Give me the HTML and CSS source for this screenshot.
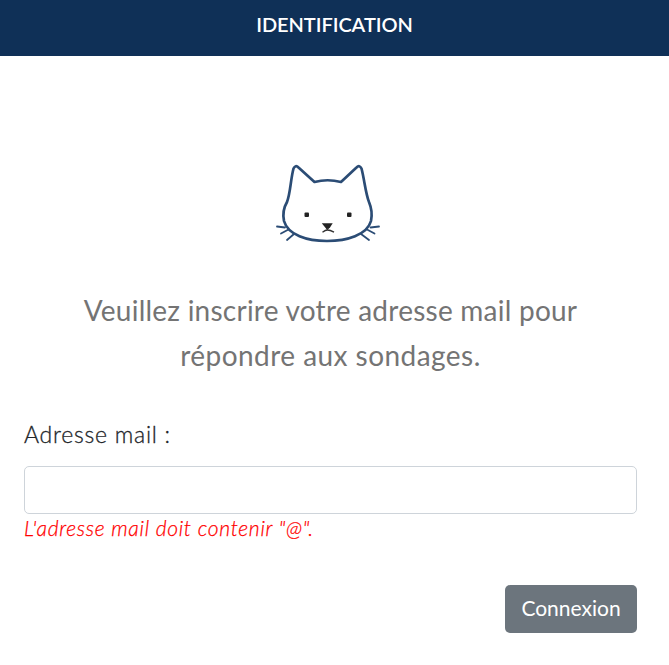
FILE: index.html
```html
<!DOCTYPE html>
<html lang="fr">
<head>
<meta charset="utf-8">
<title>Identification</title>
<link rel="stylesheet" href="styles.css">
</head>
<body>
<header class="topbar"><h1 class="title">IDENTIFICATION</h1></header>
<main class="content">
<svg class="logo" viewBox="265 150 130 105" aria-hidden="true">
<g class="outline">
<path d="M314.500 182L298.500 167.500Q295.500 164.500 293.500 168.500C290.500 180 290.500 193 287 202C283.500 208 282.500 214 284 221C288 235 307 241 327 241C347 241 367 235 371 221C372.500 214 371.500 208 369 202C365.500 193 364.500 180 361.500 168.500Q359.500 164.500 356.500 167.500L341 182Q327.500 178.500 314.500 182Z"/>
<path class="whisker" d="M277 226.500L285 227.500M281 233.500L288.500 229.500M287 240L294 234M379 226.500L370.500 227.500M374.500 233.500L367 229.500M369 240L361 234"/>
</g>
<g class="face">
<rect x="304.500" y="212.500" width="4.500" height="4.500" rx="1"/><rect x="347" y="212.500" width="4.500" height="4.500" rx="1"/>
<path d="M321.800 223.300H332.700L330 227.500L327.800 229.500H326.800Z"/>
<path class="mouth" d="M327.400 228V230Q325.500 230 322.500 232.200M327.400 230Q330 230 334 232.200"/>
</g>
</svg>
<p class="intro">Veuillez inscrire votre adresse mail pour<br><span class="intro-end">répondre aux sondages.</span></p>
<form class="form">
<label class="label" for="mail">Adresse mail :</label>
<input class="field" id="mail" type="text">
<p class="error">L'adresse mail doit contenir "@".</p>
<button class="submit" type="button">Connexion</button>
</form>
</main>
</body>
</html>
```
FILE: styles.css
```css
* { box-sizing: border-box; }
body { margin: 0; background: #fff; color: #212529; font-family: Lato, sans-serif; font-weight: 400; }
.topbar { height: 56px; background: #0f3057; display: flex; justify-content: center; padding-top: 9px; }
.title { margin: 0; color: #fff; font-size: 20px; line-height: 30px; font-weight: 600; letter-spacing: -0.05px; white-space: nowrap; }
.content { padding: 94px 32px 0 24px; }
.logo { display: block; width: 130px; height: 105px; margin-left: 241px; }
.outline { fill: none; stroke: #2b4c75; stroke-width: 2.7; stroke-linejoin: round; }
.whisker { stroke-width: 1.8; stroke-linecap: round; }
.face { fill: #222; }
.mouth { fill: none; stroke: #333; stroke-width: 1.4; }
.intro { margin: 33px 0 0; text-align: center; color: #747474; font-size: 28px; letter-spacing: 0.24px; line-height: 45px; white-space: nowrap; }
.intro-end { letter-spacing: 0.45px; }
.form { display: flex; flex-direction: column; margin-top: 38px; }
.label { font-size: 23px; font-weight: 300; letter-spacing: 0.75px; -webkit-text-stroke: 0.3px; line-height: 36px; height: 50px; white-space: nowrap; }
.field { width: 100%; height: 48px; border: 1px solid #ced4da; border-radius: 5px; padding: 6px 12px; background: #fff; font: inherit; }
.error { margin: -1px 0 0; color: #ff0000; font-size: 21px; font-weight: 300; letter-spacing: 0.7px; -webkit-text-stroke: 0.25px; line-height: 30px; font-style: italic; white-space: nowrap; }
.submit { align-self: flex-end; margin-top: 42px; width: 132px; height: 48px; border: 0; border-radius: 5px; background: #6c757d; color: #fff; font: 400 21px/30px Lato, sans-serif; padding: 0 0 2px; }
```
